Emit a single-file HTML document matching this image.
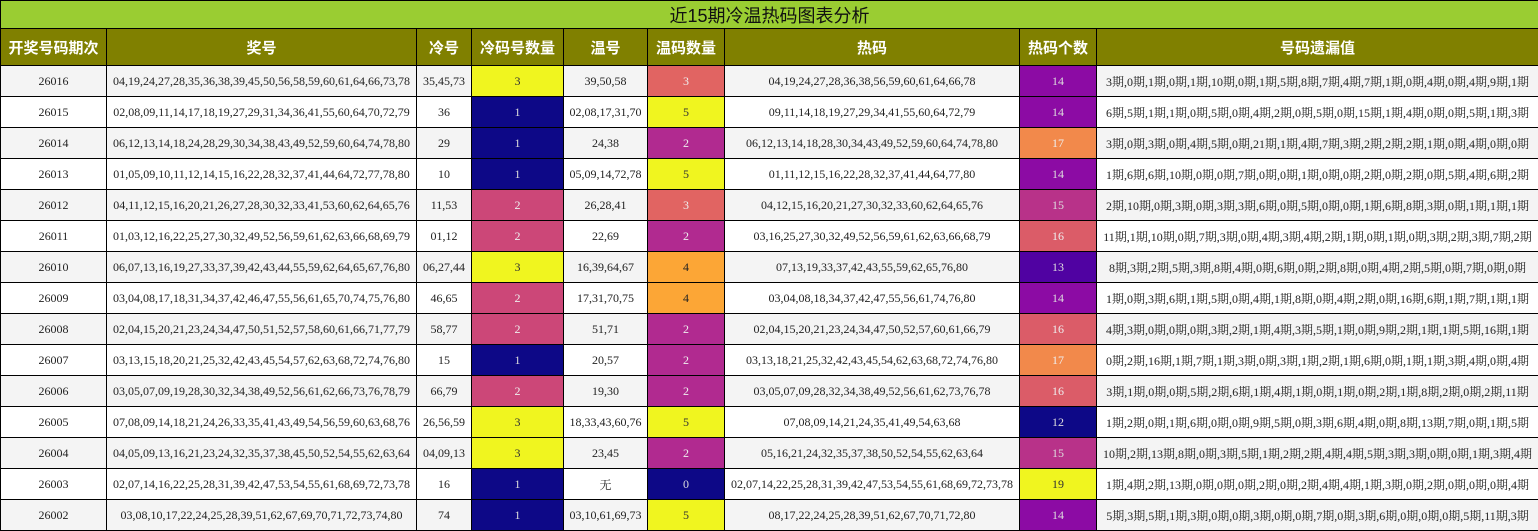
<!DOCTYPE html>
<html><head><meta charset="utf-8"><style>
body{margin:0;background:#fff;width:1538px;height:531px;overflow:hidden}
table{border-collapse:collapse;table-layout:fixed;width:1538px;font-family:"Liberation Serif","Noto Serif CJK SC",serif;font-size:12px;color:#222}
td,th{border:1px solid #000;text-align:center;padding:0;white-space:nowrap;overflow:hidden}
.t td{background:#9acd32;height:27px;font-family:"Liberation Sans","Noto Sans CJK SC",sans-serif;font-size:18px;color:#111}
th{background:#808000;color:#fff;height:36px;font-family:"Liberation Sans","Noto Sans CJK SC",sans-serif;font-size:15px;font-weight:bold}
tr.r td{height:30px}
tr.r:nth-child(odd) td{background:#f4f4f4}
tr.r:nth-child(even) td{background:#fff}
tr.r td.y{background:#f0f51f;color:#333}
tr.r td.n{background:#0d0887;color:#ddd}
tr.r td.p{background:#cc4778;color:#eee}
tr.r td.c{background:#e16462;color:#eee}
tr.r td.m{background:#b12a90;color:#eee}
tr.r td.o{background:#fca636;color:#222}
tr.r td.h13{background:#5002a2;color:#ddd}
tr.r td.h14{background:#8c0ba4;color:#ddd}
tr.r td.h15{background:#b83289;color:#ddd}
tr.r td.h16{background:#db5c68;color:#eee}
tr.r td.h17{background:#f2894b;color:#eee}
</style></head><body>
<table>
<colgroup><col style="width:106px"><col style="width:310px"><col style="width:55px"><col style="width:92px"><col style="width:84px"><col style="width:77px"><col style="width:295px"><col style="width:77px"><col style="width:442px"></colgroup>
<tr class="t"><td colspan="9">近15期冷温热码图表分析</td></tr>
<tr><th>开奖号码期次</th><th>奖号</th><th>冷号</th><th>冷码号数量</th><th>温号</th><th>温码数量</th><th>热码</th><th>热码个数</th><th>号码遗漏值</th></tr>
<tr class="r"><td>26016</td><td>04,19,24,27,28,35,36,38,39,45,50,56,58,59,60,61,64,66,73,78</td><td>35,45,73</td><td class="y">3</td><td>39,50,58</td><td class="c">3</td><td>04,19,24,27,28,36,38,56,59,60,61,64,66,78</td><td class="h14">14</td><td>3期,0期,1期,0期,1期,10期,0期,1期,5期,8期,7期,4期,7期,1期,0期,4期,0期,4期,9期,1期</td></tr>
<tr class="r"><td>26015</td><td>02,08,09,11,14,17,18,19,27,29,31,34,36,41,55,60,64,70,72,79</td><td>36</td><td class="n">1</td><td>02,08,17,31,70</td><td class="y">5</td><td>09,11,14,18,19,27,29,34,41,55,60,64,72,79</td><td class="h14">14</td><td>6期,5期,1期,1期,0期,5期,0期,4期,2期,0期,5期,0期,15期,1期,4期,0期,0期,5期,1期,3期</td></tr>
<tr class="r"><td>26014</td><td>06,12,13,14,18,24,28,29,30,34,38,43,49,52,59,60,64,74,78,80</td><td>29</td><td class="n">1</td><td>24,38</td><td class="m">2</td><td>06,12,13,14,18,28,30,34,43,49,52,59,60,64,74,78,80</td><td class="h17">17</td><td>3期,0期,3期,0期,4期,5期,0期,21期,1期,4期,7期,3期,2期,2期,2期,1期,0期,4期,0期,0期</td></tr>
<tr class="r"><td>26013</td><td>01,05,09,10,11,12,14,15,16,22,28,32,37,41,44,64,72,77,78,80</td><td>10</td><td class="n">1</td><td>05,09,14,72,78</td><td class="y">5</td><td>01,11,12,15,16,22,28,32,37,41,44,64,77,80</td><td class="h14">14</td><td>1期,6期,6期,10期,0期,0期,7期,0期,0期,1期,0期,0期,2期,0期,2期,0期,5期,4期,6期,2期</td></tr>
<tr class="r"><td>26012</td><td>04,11,12,15,16,20,21,26,27,28,30,32,33,41,53,60,62,64,65,76</td><td>11,53</td><td class="p">2</td><td>26,28,41</td><td class="c">3</td><td>04,12,15,16,20,21,27,30,32,33,60,62,64,65,76</td><td class="h15">15</td><td>2期,10期,0期,3期,0期,3期,3期,6期,0期,5期,0期,0期,1期,6期,8期,3期,0期,1期,1期,1期</td></tr>
<tr class="r"><td>26011</td><td>01,03,12,16,22,25,27,30,32,49,52,56,59,61,62,63,66,68,69,79</td><td>01,12</td><td class="p">2</td><td>22,69</td><td class="m">2</td><td>03,16,25,27,30,32,49,52,56,59,61,62,63,66,68,79</td><td class="h16">16</td><td>11期,1期,10期,0期,7期,3期,0期,4期,3期,4期,2期,1期,0期,1期,0期,3期,2期,3期,7期,2期</td></tr>
<tr class="r"><td>26010</td><td>06,07,13,16,19,27,33,37,39,42,43,44,55,59,62,64,65,67,76,80</td><td>06,27,44</td><td class="y">3</td><td>16,39,64,67</td><td class="o">4</td><td>07,13,19,33,37,42,43,55,59,62,65,76,80</td><td class="h13">13</td><td>8期,3期,2期,5期,3期,8期,4期,0期,6期,0期,2期,8期,0期,4期,2期,5期,0期,7期,0期,0期</td></tr>
<tr class="r"><td>26009</td><td>03,04,08,17,18,31,34,37,42,46,47,55,56,61,65,70,74,75,76,80</td><td>46,65</td><td class="p">2</td><td>17,31,70,75</td><td class="o">4</td><td>03,04,08,18,34,37,42,47,55,56,61,74,76,80</td><td class="h14">14</td><td>1期,0期,3期,6期,1期,5期,0期,4期,1期,8期,0期,4期,2期,0期,16期,6期,1期,7期,1期,1期</td></tr>
<tr class="r"><td>26008</td><td>02,04,15,20,21,23,24,34,47,50,51,52,57,58,60,61,66,71,77,79</td><td>58,77</td><td class="p">2</td><td>51,71</td><td class="m">2</td><td>02,04,15,20,21,23,24,34,47,50,52,57,60,61,66,79</td><td class="h16">16</td><td>4期,3期,0期,0期,0期,3期,2期,1期,4期,3期,5期,1期,0期,9期,2期,1期,1期,5期,16期,1期</td></tr>
<tr class="r"><td>26007</td><td>03,13,15,18,20,21,25,32,42,43,45,54,57,62,63,68,72,74,76,80</td><td>15</td><td class="n">1</td><td>20,57</td><td class="m">2</td><td>03,13,18,21,25,32,42,43,45,54,62,63,68,72,74,76,80</td><td class="h17">17</td><td>0期,2期,16期,1期,7期,1期,3期,0期,3期,1期,2期,1期,6期,0期,1期,1期,3期,4期,0期,4期</td></tr>
<tr class="r"><td>26006</td><td>03,05,07,09,19,28,30,32,34,38,49,52,56,61,62,66,73,76,78,79</td><td>66,79</td><td class="p">2</td><td>19,30</td><td class="m">2</td><td>03,05,07,09,28,32,34,38,49,52,56,61,62,73,76,78</td><td class="h16">16</td><td>3期,1期,0期,0期,5期,2期,6期,1期,4期,1期,0期,1期,0期,2期,1期,8期,2期,0期,2期,11期</td></tr>
<tr class="r"><td>26005</td><td>07,08,09,14,18,21,24,26,33,35,41,43,49,54,56,59,60,63,68,76</td><td>26,56,59</td><td class="y">3</td><td>18,33,43,60,76</td><td class="y">5</td><td>07,08,09,14,21,24,35,41,49,54,63,68</td><td class="n">12</td><td>1期,2期,0期,1期,6期,0期,0期,9期,5期,0期,3期,6期,4期,0期,8期,13期,7期,0期,1期,5期</td></tr>
<tr class="r"><td>26004</td><td>04,05,09,13,16,21,23,24,32,35,37,38,45,50,52,54,55,62,63,64</td><td>04,09,13</td><td class="y">3</td><td>23,45</td><td class="m">2</td><td>05,16,21,24,32,35,37,38,50,52,54,55,62,63,64</td><td class="h15">15</td><td>10期,2期,13期,8期,0期,3期,5期,1期,2期,2期,4期,4期,5期,3期,3期,0期,0期,1期,3期,4期</td></tr>
<tr class="r"><td>26003</td><td>02,07,14,16,22,25,28,31,39,42,47,53,54,55,61,68,69,72,73,78</td><td>16</td><td class="n">1</td><td>无</td><td class="n">0</td><td>02,07,14,22,25,28,31,39,42,47,53,54,55,61,68,69,72,73,78</td><td class="y">19</td><td>1期,4期,2期,13期,0期,0期,0期,2期,0期,2期,4期,4期,1期,3期,0期,2期,0期,0期,0期,4期</td></tr>
<tr class="r"><td>26002</td><td>03,08,10,17,22,24,25,28,39,51,62,67,69,70,71,72,73,74,80</td><td>74</td><td class="n">1</td><td>03,10,61,69,73</td><td class="y">5</td><td>08,17,22,24,25,28,39,51,62,67,70,71,72,80</td><td class="h14">14</td><td>5期,3期,5期,1期,3期,0期,0期,3期,0期,0期,7期,0期,3期,6期,0期,0期,0期,5期,11期,3期</td></tr>
</table>
</body></html>
